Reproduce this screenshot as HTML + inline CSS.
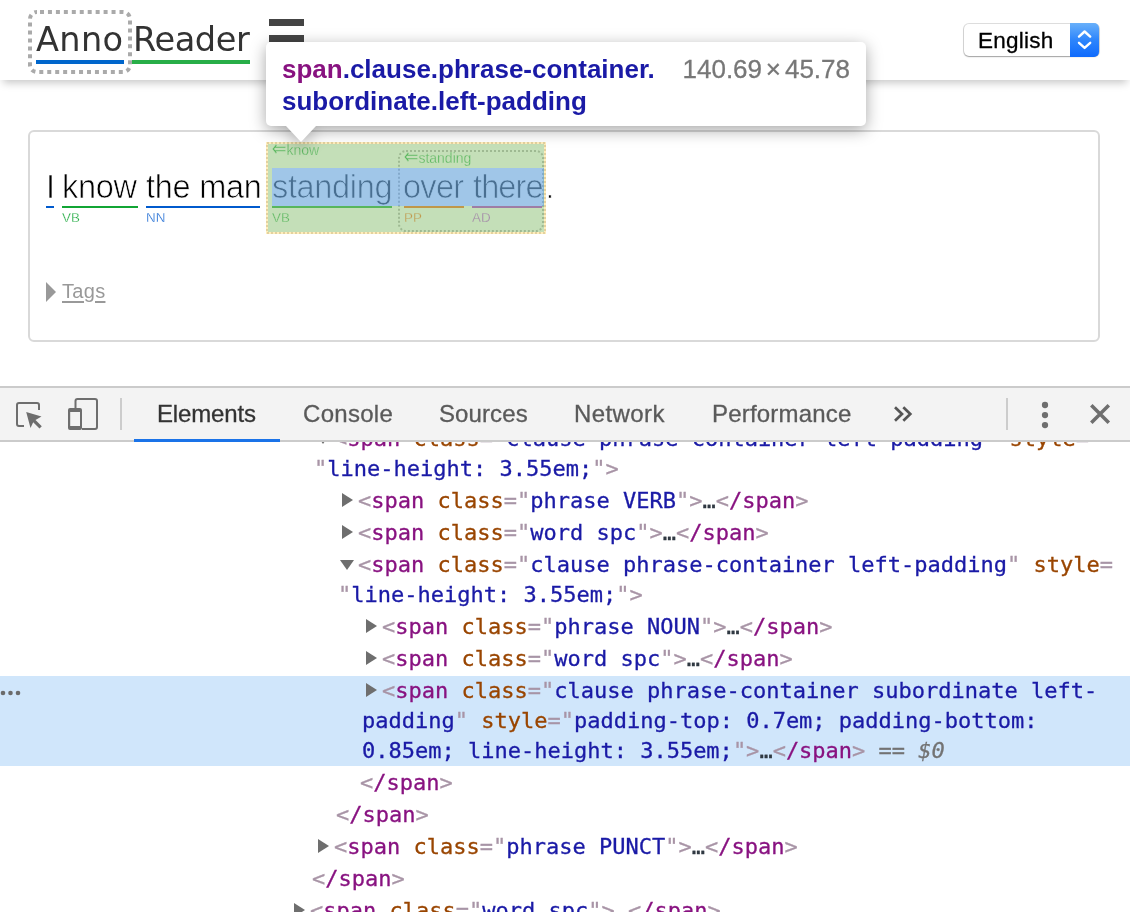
<!DOCTYPE html>
<html lang="en">
<head>
<meta charset="utf-8">
<title>Anno Reader</title>
<style>
html,body{margin:0;padding:0}
body{width:1130px;height:912px;overflow:hidden;position:relative;background:#fff;font-family:"Liberation Sans",sans-serif;color:#000}
.abs{position:absolute}
.w,.lb,.logo,.tab,#tree,#tags,#select .txt,#tip{will-change:transform}
/* header */
#header{position:absolute;left:0;top:0;width:1130px;height:80px;background:#fff;box-shadow:0 6px 8px -3px rgba(0,0,0,.22)}
.logo{position:absolute;top:20px;font-family:"DejaVu Sans","Liberation Sans",sans-serif;font-size:33.6px;line-height:40px;color:#333;white-space:nowrap}
.bar{position:absolute;height:4px;top:60px}
.hb{position:absolute;left:269px;width:35px;height:7px;background:#444}
#select{position:absolute;left:964px;top:23.7px;width:134.5px;height:32.3px;border-radius:5px;background:#fff;box-shadow:0 0 0 1px rgba(0,0,0,.13),0 1px 1.5px rgba(0,0,0,.28)}
#select .txt{-webkit-text-stroke:.3px;position:absolute;left:13.6px;top:4.3px;font-size:22.5px;line-height:26px;color:#000;letter-spacing:.25px}
#select .btn{position:absolute;left:106px;top:-.7px;width:29px;height:33.5px;border-radius:0 5px 5px 0;background:linear-gradient(#69b0fa,#2d85fc 50%,#0f6bfd)}
/* card */
#card{position:absolute;left:28px;top:130px;width:1068px;height:208px;border:2px solid #d9d9d9;border-radius:6px}
.w{position:absolute;top:167px;-webkit-text-stroke:.7px #fff;font-size:32.5px;line-height:40px;white-space:nowrap;color:#000}
.ul{position:absolute;top:206px;height:2px}
.lb{position:absolute;-webkit-text-stroke:.3px #fff;font-size:14px;line-height:16px;white-space:nowrap}
.lb i{font-style:normal;font-family:"DejaVu Sans",sans-serif;font-size:16px;line-height:16px;display:inline-block;vertical-align:top;transform:translateY(-.9px) scale(1.1,1.4);transform-origin:100% 55%}
.g{color:#12a535}.b{color:#0a5fd0}.o{color:#f5600a}.p{color:#ac26d6}

/* devtools */
#dt{position:absolute;left:0;top:386px;width:1130px;height:526px;background:#fff;overflow:hidden}
#tb{position:absolute;left:0;top:0;width:1130px;height:52px;border-top:2px solid #cbcbcb;border-bottom:2px solid #cbcbcb;background:#f3f3f3}
.tab{position:absolute;top:12px;-webkit-text-stroke:.3px;font-size:24px;line-height:28px;color:#5a5a5a;white-space:nowrap}
.tab.sel{color:#333}
.vd{position:absolute;top:10px;width:2px;height:32px;background:#ccc}
#tree{position:absolute;left:0;top:56px;width:1130px;height:470px;overflow:hidden;font-family:"DejaVu Sans Mono","Liberation Mono",monospace;font-size:22px;line-height:30px;color:#303942}
.r{position:absolute;white-space:pre;height:30px;-webkit-text-stroke:.3px}
.t{color:#881280}.k{color:#a894a6}.n{color:#994500}.v{color:#1a1aa6}
.eq{color:#737373}
.tr{position:absolute;width:0;height:0;border-style:solid;border-color:transparent}
.tr.rt{border-width:7.2px 0 7.2px 11px;border-left-color:#6e6e6e}
.tr.dn{border-width:10.6px 7.3px 0 7.3px;border-top-color:#6e6e6e}
#selrow{position:absolute;left:0;top:234px;width:1130px;height:90px;background:#d0e6fb}

/* tags */
#tags{position:absolute;left:62px;top:279px;font-size:20px;line-height:24px;color:#999;text-decoration:underline;text-underline-offset:2.5px;text-decoration-thickness:1.6px;letter-spacing:.3px}
#tagtri{position:absolute;left:46px;top:282px;width:0;height:0;border-style:solid;border-width:10px 0 10px 10px;border-color:transparent transparent transparent #999}
/* clause boxes */
/* devtools highlight overlay */
.hl{position:absolute}
#tip{position:absolute;left:266px;top:42px;width:600px;height:84px;background:#fff;border-radius:5px;}
#tip .l1,#tip .l2{position:absolute;left:16px;font-weight:bold;font-size:26px;line-height:32px;white-space:nowrap;color:#1a1aa6}
#tip .dim{-webkit-text-stroke:.3px;position:absolute;right:16px;top:11px;font-size:26px;line-height:32px;color:#777;white-space:nowrap}
#tipwrap{position:absolute;left:0;top:0;width:1130px;height:386px;filter:drop-shadow(0 4px 8px rgba(0,0,0,.35))}
#tiparrow{position:absolute;left:286px;top:125.5px;width:0;height:0;border-style:solid;border-width:16px 15px 0 15px;border-color:#fff transparent transparent transparent}
</style>
</head>
<body>
<div id="header">
  <svg class="abs" style="left:26px;top:8px" width="110" height="70" viewBox="26 8 110 70"><rect x="30" y="12" width="100" height="60" rx="7" ry="7" fill="none" stroke="#aaa" stroke-width="4" stroke-dasharray="4 3.95" stroke-dashoffset="-3"/></svg>
  <div class="logo" style="left:36px;letter-spacing:.35px">Anno</div>
  <div class="logo" style="left:132.5px;letter-spacing:-.4px">Reader</div>
  <div class="bar" style="left:36px;width:88px;background:#0066cc"></div>
  <div class="bar" style="left:132px;width:118px;background:#28ae48"></div>
  <div class="hb" style="top:19px"></div>
  <div class="hb" style="top:35px"></div>
  <div class="hb" style="top:51px"></div>
  <div id="select"><div class="txt">English</div><div class="btn">
    <svg width="29" height="33" viewBox="0 0 29 33"><path d="M9 13.6 L14.6 8.5 L20.2 13.6 M9 19.8 L14.6 24.9 L20.2 19.8" fill="none" stroke="#fff" stroke-width="2.4" stroke-linecap="round" stroke-linejoin="round"/></svg>
  </div></div>
</div>

<div id="card"></div>
<!-- sentence -->
<div class="w" style="left:46px">I</div>
<div class="w" style="left:62px;letter-spacing:-.3px">know</div>
<div class="w" style="left:145.8px;letter-spacing:-.25px">the man</div>
<div class="w" style="left:271.8px;letter-spacing:-.34px">standing</div>
<div class="w" style="left:403px;letter-spacing:-.7px">over</div>
<div class="w" style="left:472.7px;letter-spacing:-.9px">there</div>
<div class="w" style="left:546.3px;top:168.6px;font-size:28px">.</div>
<div class="ul" style="left:46px;width:8px;background:#005acd"></div>
<div class="ul" style="left:62px;width:76px;background:#11a534"></div>
<div class="ul" style="left:146px;width:114px;background:#005acd"></div>
<div class="ul" style="left:272px;width:120px;background:#11a534"></div>
<div class="ul" style="left:404px;width:60px;background:#f5600a"></div>
<div class="ul" style="left:472px;width:70px;background:#ac26d6"></div>
<div class="lb g" style="left:62px;top:210px;font-size:13.4px">VB</div>
<div class="lb b" style="left:146px;top:210px;font-size:13.4px">NN</div>
<div class="lb g" style="left:272px;top:210px;font-size:13.4px">VB</div>
<div class="lb o" style="left:404px;top:210px;font-size:13.4px">PP</div>
<div class="lb p" style="left:472px;top:210px;font-size:13.4px">AD</div>
<div class="lb g" style="left:272.5px;top:141.8px"><i>⇐</i>know</div>
<div class="lb g" style="left:404.5px;top:150px"><i>⇐</i>standing</div>


<div id="tagtri"></div><div id="tags">Tags</div>
<svg class="abs" style="left:260px;top:136px" width="292" height="104" viewBox="260 136 292 104"><rect x="267" y="143" width="278" height="90" fill="none" stroke="#aaa" stroke-width="2" stroke-dasharray="2 2"/><rect x="399" y="151" width="144" height="80" rx="7" ry="7" fill="none" stroke="#aaa" stroke-width="2" stroke-dasharray="2 2"/></svg>
<!-- inspector highlight -->
<div class="hl" style="left:266px;top:142px;width:280px;height:92px;background:rgba(255,229,153,.66);clip-path:polygon(0 0,100% 0,100% 100%,0 100%,0 0,2px 2px,2px 90px,278px 90px,278px 2px,2px 2px)"></div>
<div class="hl" style="left:268px;top:144px;width:276px;height:88px;background:rgba(147,196,125,.55);clip-path:polygon(0 0,100% 0,100% 100%,0 100%,0 0,4px 24px,4px 62px,275px 62px,275px 24px,4px 24px)"></div>
<div class="hl" style="left:272px;top:168px;width:272px;height:38px;background:rgba(111,168,220,.66)"></div>
<div id="tipwrap"><div id="tip"><div class="l1" style="top:11px"><span style="color:#881280">span</span>.clause.phrase-container.</div><div class="l2" style="top:43px">subordinate.left-padding</div><div class="dim">140.69<span style="margin:0 4px 0 3.7px">×</span>45.78</div></div>
<div id="tiparrow"></div></div>
<div id="dt">
<div id="tb">
<svg class="abs" style="left:0;top:-2px" width="130" height="56" viewBox="0 386 130 56">
 <g fill="none" stroke="#6e6e6e" stroke-width="2">
  <path d="M24 426 H19 a2 2 0 0 1 -2 -2 V405 a2 2 0 0 1 2 -2 H37 a2 2 0 0 1 2 2 V410"/>
 </g>
 <path d="M26.2 412 L41.5 416.5 L35.5 420 L41.8 426.3 L39.5 428.6 L33.2 422.3 L30.5 428 Z" fill="#6e6e6e"/>
 <path d="M75.5 408 V401 a2 2 0 0 1 2 -2 H95 a2 2 0 0 1 2 2 V427 a2 2 0 0 1 -2 2 H82" fill="none" stroke="#6e6e6e" stroke-width="2"/>
 <path d="M70 408 h10 a2 2 0 0 1 2 2 v18 a2 2 0 0 1 -2 2 h-10 a2 2 0 0 1 -2 -2 v-18 a2 2 0 0 1 2 -2 Z M70.2 412 v14 h9.8 v-14 Z" fill="#6e6e6e" fill-rule="evenodd"/>
</svg>
<div class="vd" style="left:120px"></div>
<div class="tab sel" style="left:156.7px;letter-spacing:-.15px">Elements</div>
<div class="tab" style="left:302.5px;letter-spacing:.3px">Console</div>
<div class="tab" style="left:438.5px;letter-spacing:.1px">Sources</div>
<div class="tab" style="left:574px;letter-spacing:.4px">Network</div>
<div class="tab" style="left:712px;letter-spacing:.2px">Performance</div>
<svg class="abs" style="left:880px;top:-2px" width="250" height="56" viewBox="880 386 250 56">
 <path d="M895 407.2 L902 414 L895 420.8 M903.3 407.2 L910.3 414 L903.3 420.8" fill="none" stroke="#555" stroke-width="2.7"/>
 <circle cx="1045" cy="405" r="3.15" fill="#6e6e6e"/><circle cx="1045" cy="415.05" r="3.15" fill="#6e6e6e"/><circle cx="1045" cy="425.1" r="3.15" fill="#6e6e6e"/>
 <path d="M1091.3 405.2 L1108.8 422.7 M1108.8 405.2 L1091.3 422.7" fill="none" stroke="#6e6e6e" stroke-width="3.5"/>
</svg>
<div class="vd" style="left:1006px"></div>
<div class="abs" style="left:134px;top:51px;width:146px;height:3px;background:#1a73e8"></div>
</div>
<div id="tree">
<div id="selrow"></div>
<div class="tr dn" style="left:315.7px;top:-7.7px"></div>
<div class="r" style="left:334px;top:-17.9px"><span class="k">&lt;</span><span class="t">span</span> <span class="n">class</span><span class="k">="</span><span class="v">clause phrase-container left-padding</span><span class="k">"</span> <span class="n">style</span><span class="k">=</span></div>
<div class="r" style="left:314px;top:12.1px"><span class="k">"</span><span class="v">line-height: 3.55em;</span><span class="k">"&gt;</span></div>
<div class="tr rt" style="left:342px;top:50.8px"></div>
<div class="r" style="left:358px;top:44.1px"><span class="k">&lt;</span><span class="t">span</span> <span class="n">class</span><span class="k">="</span><span class="v">phrase VERB</span><span class="k">"</span><span class="k">&gt;</span>…<span class="k">&lt;</span><span class="t">/span</span><span class="k">&gt;</span></div>
<div class="tr rt" style="left:342px;top:82.8px"></div>
<div class="r" style="left:358px;top:76.1px"><span class="k">&lt;</span><span class="t">span</span> <span class="n">class</span><span class="k">="</span><span class="v">word spc</span><span class="k">"</span><span class="k">&gt;</span>…<span class="k">&lt;</span><span class="t">/span</span><span class="k">&gt;</span></div>
<div class="tr dn" style="left:339.7px;top:118.3px"></div>
<div class="r" style="left:358px;top:108.1px"><span class="k">&lt;</span><span class="t">span</span> <span class="n">class</span><span class="k">="</span><span class="v">clause phrase-container left-padding</span><span class="k">"</span> <span class="n">style</span><span class="k">=</span></div>
<div class="r" style="left:338px;top:138.1px"><span class="k">"</span><span class="v">line-height: 3.55em;</span><span class="k">"&gt;</span></div>
<div class="tr rt" style="left:366px;top:176.8px"></div>
<div class="r" style="left:382px;top:170.1px"><span class="k">&lt;</span><span class="t">span</span> <span class="n">class</span><span class="k">="</span><span class="v">phrase NOUN</span><span class="k">"</span><span class="k">&gt;</span>…<span class="k">&lt;</span><span class="t">/span</span><span class="k">&gt;</span></div>
<div class="tr rt" style="left:366px;top:208.8px"></div>
<div class="r" style="left:382px;top:202.1px"><span class="k">&lt;</span><span class="t">span</span> <span class="n">class</span><span class="k">="</span><span class="v">word spc</span><span class="k">"</span><span class="k">&gt;</span>…<span class="k">&lt;</span><span class="t">/span</span><span class="k">&gt;</span></div>
<div class="tr rt" style="left:366px;top:240.8px"></div>
<div class="r" style="left:382px;top:234.1px"><span class="k">&lt;</span><span class="t">span</span> <span class="n">class</span><span class="k">="</span><span class="v">clause phrase-container subordinate left-</span></div>
<div class="r" style="left:362px;top:264.1px"><span class="v">padding</span><span class="k">"</span> <span class="n">style</span><span class="k">="</span><span class="v">padding-top: 0.7em; padding-bottom:</span></div>
<div class="r" style="left:362px;top:294.1px"><span class="v">0.85em; line-height: 3.55em;</span><span class="k">"&gt;</span>…<span class="k">&lt;</span><span class="t">/span</span><span class="k">&gt;</span><span class="eq"> == <i>$0</i></span></div>
<div class="r" style="left:360px;top:326.1px"><span class="k">&lt;</span><span class="t">/span</span><span class="k">&gt;</span></div>
<div class="r" style="left:336px;top:358.1px"><span class="k">&lt;</span><span class="t">/span</span><span class="k">&gt;</span></div>
<div class="tr rt" style="left:318px;top:396.8px"></div>
<div class="r" style="left:334px;top:390.1px"><span class="k">&lt;</span><span class="t">span</span> <span class="n">class</span><span class="k">="</span><span class="v">phrase PUNCT</span><span class="k">"</span><span class="k">&gt;</span>…<span class="k">&lt;</span><span class="t">/span</span><span class="k">&gt;</span></div>
<div class="r" style="left:312px;top:422.1px"><span class="k">&lt;</span><span class="t">/span</span><span class="k">&gt;</span></div>
<div class="tr rt" style="left:294px;top:460.8px"></div>
<div class="r" style="left:310px;top:454.1px"><span class="k">&lt;</span><span class="t">span</span> <span class="n">class</span><span class="k">="</span><span class="v">word spc</span><span class="k">"</span><span class="k">&gt;</span>…<span class="k">&lt;</span><span class="t">/span</span><span class="k">&gt;</span></div>
<div class="abs" style="left:-.3px;top:248.2px;width:22px;height:6px"><svg style="display:block" width="22" height="6" viewBox="0 0 22 6"><circle cx="3" cy="3" r="2.3" fill="#6b6b6b"/><circle cx="10.5" cy="3" r="2.3" fill="#6b6b6b"/><circle cx="18" cy="3" r="2.3" fill="#6b6b6b"/></svg></div>
</div>
</div>
</body>
</html>
